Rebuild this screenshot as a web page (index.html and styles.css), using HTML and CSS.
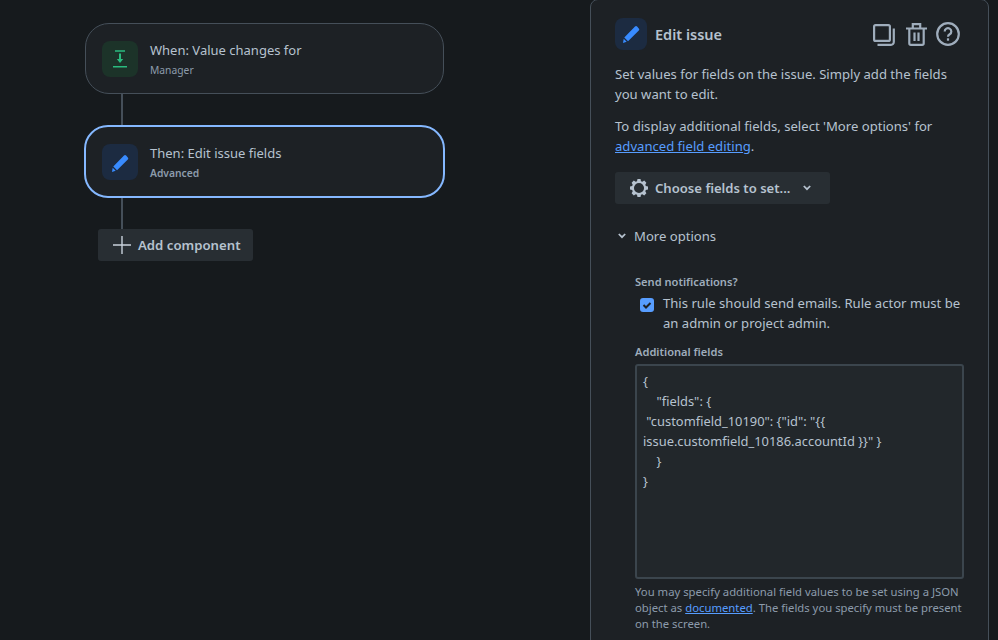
FILE: index.html
```html
<!DOCTYPE html>
<html lang="en">
<head>
<meta charset="utf-8">
<title>Edit issue</title>
<link rel="stylesheet" href="styles.css">
</head>
<body>
<main class="page">
  <section class="flow">
    <div class="node">
      <span class="tile tile-green">
        <svg width="24" height="24" viewBox="0 0 24 24"><path d="M7 3.300h10v1.500H7zM5 19h14v1.500H5z" fill="#2abb7f"/><path d="M11 6.500h2V12h2.200L12 16l-3.200-4H11z" fill="#2abb7f"/></svg>
      </span>
      <div class="node-text">
        <div class="node-title">When: Value changes for</div>
        <div class="node-sub">Manager</div>
      </div>
    </div>
    <div class="line line-a"></div>
    <div class="node node-active">
      <span class="tile tile-blue">
        <svg width="24" height="24" viewBox="0 0 24 24"><path d="M16 5.500a1.500 1.500 0 0 1 2.100 0l1.700 1.900a1.500 1.500 0 0 1 0 2.100L9 20.300l-3.700-3.800z" fill="#388bff"/><path d="M4.700 17.800l3 3L4 22z" fill="#388bff"/></svg>
      </span>
      <div class="node-text">
        <div class="node-title">Then: Edit issue fields</div>
        <div class="node-sub node-sub-strong">Advanced</div>
      </div>
    </div>
    <div class="line line-b"></div>
    <button class="btn btn-add">
      <svg width="20" height="20" viewBox="0 0 20 20"><path d="M9.300 1h1.400v8.300H19v1.400h-8.300V19H9.300v-8.300H1V9.300h8.300z" fill="#c7d1db"/></svg>
      Add component
    </button>
  </section>

  <aside class="panel">
    <header class="panel-head">
      <span class="tile tile-blue tile-sm">
        <svg width="24" height="24" viewBox="0 0 24 24"><path d="M16 4.500a1.500 1.500 0 0 1 2.100 0l1.700 1.900a1.500 1.500 0 0 1 0 2.100L9 19.300l-3.700-3.800z" fill="#388bff"/><path d="M4.700 16.800l3 3L4 21z" fill="#388bff"/></svg>
      </span>
      <h2 class="panel-title">Edit issue</h2>
      <div class="panel-actions">
        <svg class="act-copy" width="22" height="22" viewBox="0 0 22 22" fill="none" stroke="#9fadbc" stroke-width="2.200"><rect x="1.100" y="1.100" width="15.800" height="15.800" rx="1.500"/><path d="M20.800 4.500V18a2.800 2.800 0 0 1-2.800 2.800H4.500"/></svg>
        <svg class="act-trash" width="21" height="23" viewBox="0 0 21 23" fill="none" stroke="#9fadbc" stroke-width="2.200"><path d="M0 5.500h21M6.800 5.500V1.200h7.400v4.300M3.300 5.500v14.800a1.600 1.600 0 0 0 1.600 1.600h11.200a1.600 1.600 0 0 0 1.600-1.600V5.500"/><path d="M8.500 9.500v8.500M12.500 9.500v8.500"/></svg>
        <svg width="24" height="24" viewBox="0 0 24 24" fill="none" stroke="#9fadbc" stroke-width="2.200"><circle cx="12" cy="12" r="10.800"/><path d="M8.700 9.500a3.300 3.300 0 1 1 5 2.800c-1.100.7-1.700 1.200-1.700 2.400"/><path d="M12 16.300v2.400"/></svg>
      </div>
    </header>
    <p class="para">Set values for fields on the issue. Simply add the fields you want to edit.</p>
    <p class="para">To display additional fields, select 'More options' for <a class="link" href="#">advanced field editing</a>.</p>
    <button class="btn btn-choose">
      <svg width="18" height="18" viewBox="0 0 20 20"><path fill-rule="evenodd" d="M8.300 0h3.400l.5 2.400 1.500.6 2.100-1.200 2.400 2.400-1.200 2.100.6 1.500 2.400.5v3.400l-2.400.5-.6 1.500 1.200 2.100-2.400 2.400-2.100-1.200-1.500.6-.5 2.400H8.300l-.5-2.400-1.500-.6-2.100 1.200-2.400-2.400 1.200-2.100-.6-1.500L0 11.700V8.300l2.400-.5.600-1.500L1.800 4.200l2.400-2.400 2.100 1.200 1.500-.6zM10 4.400a5.600 5.600 0 1 0 0 11.200 5.600 5.600 0 0 0 0-11.200z" fill="#b6c2cf"/></svg>
      Choose fields to set...
      <svg class="chev" width="8" height="6" viewBox="0 0 10 7" fill="none" stroke="#b6c2cf" stroke-width="2.200"><path d="M1 1l4 4 4-4"/></svg>
    </button>
    <div class="more">
      <svg width="8" height="6" viewBox="0 0 10 7" fill="none" stroke="#b6c2cf" stroke-width="2.200"><path d="M1 1l4 4 4-4"/></svg>
      More options
    </div>
    <div class="options">
      <div class="label">Send notifications?</div>
      <div class="check-row">
        <span class="check">
          <svg width="14" height="14" viewBox="0 0 14 14" fill="none" stroke="#1d2125" stroke-width="2"><path d="M3.500 7l2.500 2.500 4.500-4.500"/></svg>
        </span>
        <span class="check-text">This rule should send emails. Rule actor must be an admin or project admin.</span>
      </div>
      <div class="label label-fields">Additional fields</div>
      <div class="codebox">{
    "fields": {
 "customfield_10190": {"id": "{{ issue.customfield_10186.accountId }}" }
    }
}</div>
      <p class="help">You may specify additional field values to be set using a JSON object as <a class="link" href="#">documented</a>. The fields you specify must be present on the screen.</p>
    </div>
  </aside>
</main>
</body>
</html>
```
FILE: styles.css
```css
* { box-sizing: border-box; }
html, body { margin: 0; height: 100%; overflow: hidden; background: #161a1d; }
body { font-family: "Noto Sans", "Open Sans", sans-serif; font-size: 13.1px; color: #b6c2cf; }
.page { display: flex; height: 640px; overflow: hidden; }
.flow { width: 590px; flex: none; padding: 23px 0 0 84px; }
.node { height: 71px; margin-left: 1px; width: 359px; display: flex; align-items: center; gap: 12px; padding: 0 16px; background: #1d2125; border: 1px solid #454f59; border-radius: 24px; }
.node-active { margin-left: 0; width: 361px; height: 73px; border: 2px solid #85b8ff; }
.line { width: 2px; background: #454f59; margin-left: 37px; }
.line-a { height: 31px; }
.line-b { height: 31px; }
.tile { width: 36px; height: 36px; flex: none; display: flex; align-items: center; justify-content: center; border-radius: 8px; }
.tile-green { background: #1c3329; }
.tile-blue { background: #1c2b41; }
.tile-sm { width: 32px; height: 32px; }
.node-text { display: flex; flex-direction: column; gap: 3px; }
.node-title { font-size: 13px; line-height: 20px; color: #b6c2cf; }
.node-sub { font-size: 10.3px; line-height: 14px; color: #8c9bab; }
.node-sub-strong { font-weight: 600; }
.btn { display: flex; align-items: center; border: 0; border-radius: 3px; background: #282e33; color: #b6c2cf; font: 600 13.2px/20px "Noto Sans", "Open Sans", sans-serif; padding: 0; }
.btn-add { margin-left: 14px; height: 32px; width: 155px; padding-left: 14px; gap: 6px; }
.panel { position: relative; margin-top: -1px; width: 399px; height: 700px; flex: none; background: #1d2125; border: 1px solid #454f59; border-radius: 8px; padding: 18px 24px 0; }
.panel-head { display: flex; align-items: center; gap: 8px; height: 32px; margin-bottom: 14px; }
.panel-title { margin: 0; font-size: 14.5px; line-height: 20px; font-weight: 600; color: #b6c2cf; }
.panel-actions { margin-left: auto; display: flex; align-items: center; padding-right: 4px; }
.act-copy { margin-right: 11px; margin-top: 1px; }
.act-trash { margin-right: 9px; }
.para { margin: 0 0 12px; line-height: 20px; color: #b6c2cf; }
.link { color: #579dff; text-decoration: underline; }
.btn-choose { height: 32px; width: 215px; padding-left: 15px; gap: 7px; margin-top: 16px; font-size: 13.1px; }
.chev { margin-left: 6px; }
.more { display: flex; align-items: center; gap: 8px; height: 20px; margin-top: 22px; padding-left: 3px; }
.options { padding-left: 20px; margin-top: 28px; }
.label { font-size: 11.1px; line-height: 16px; font-weight: 600; color: #9fadbc; }
.check-row { display: flex; gap: 9px; margin-top: 3px; padding-left: 5px; }
.check { width: 14px; height: 14px; margin-top: 5px; flex: none; border-radius: 3px; background: #579dff; display: flex; align-items: center; justify-content: center; }
.check-text { line-height: 20px; }
.label-fields { margin-top: 11px; }
.codebox { margin-top: 4px; width: 329px; height: 215px; padding: 5px 6px; background: #22272b; border: 2px solid #3b454d; border-radius: 3px; font-size: 12.9px; line-height: 20px; white-space: pre-wrap; color: #b6c2cf; }
.help { margin: 5px 0 0; font-size: 11.3px; line-height: 16px; color: #8c9bab; }
```
